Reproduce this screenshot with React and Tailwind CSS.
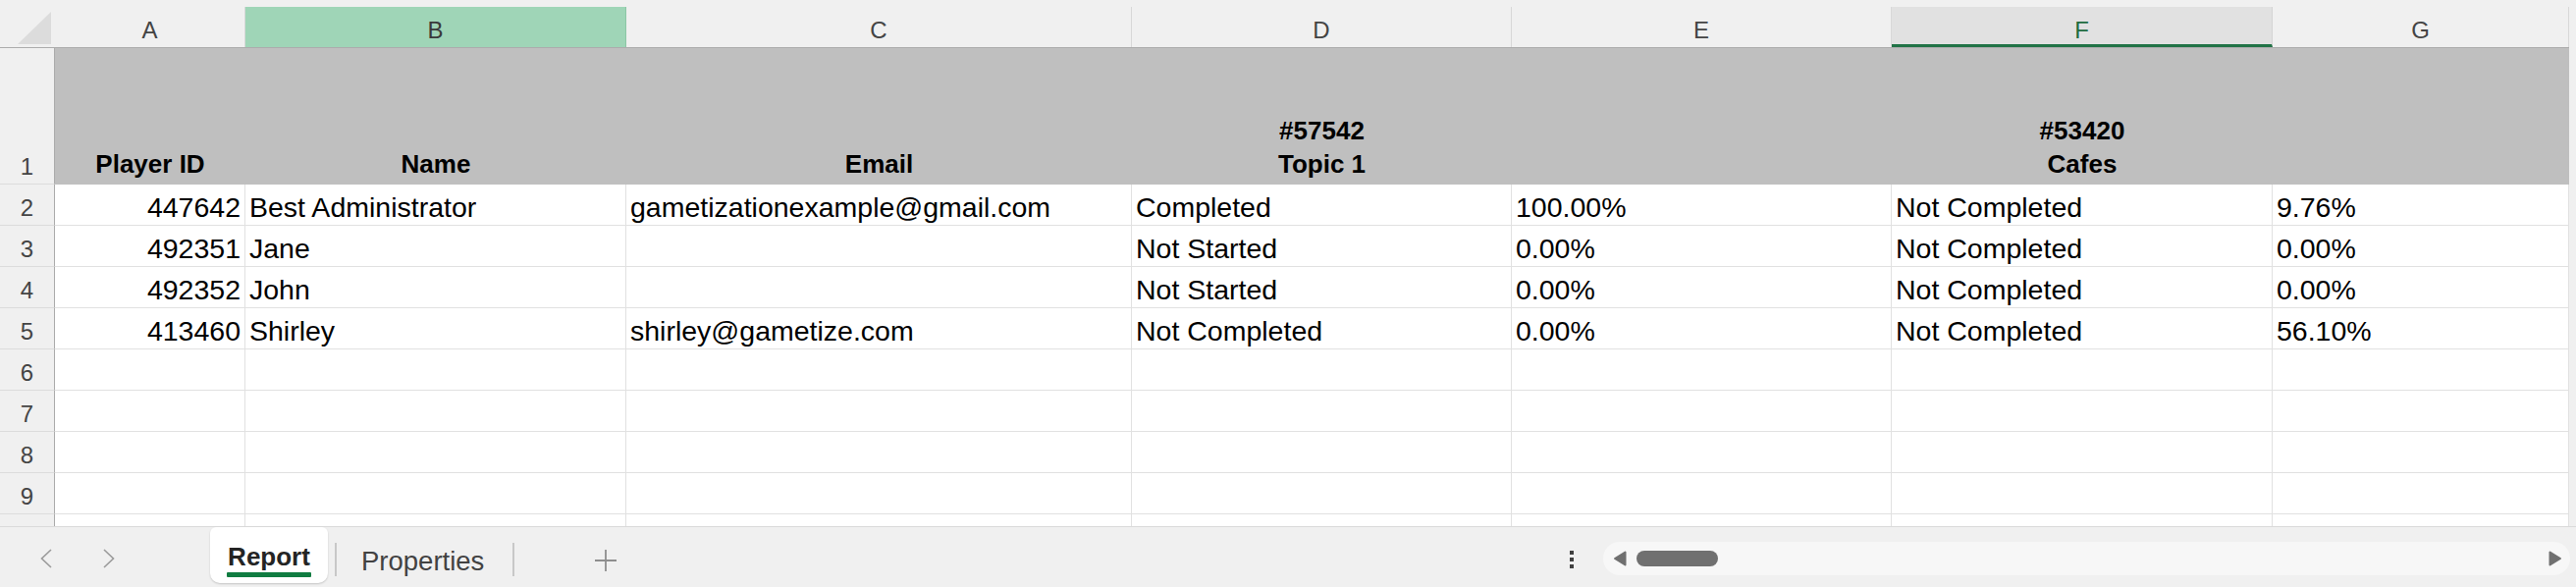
import React from "react";

// column widths (A..G), each cell carries its own right grid line
const columns = [
  { key: "A", w: "w-[194px]" },
  { key: "B", w: "w-[388px]" },
  { key: "C", w: "w-[515px]" },
  { key: "D", w: "w-[387px]" },
  { key: "E", w: "w-[387px]" },
  { key: "F", w: "w-[388px]" },
  { key: "G", w: "w-[302px]" },
];

const headings = [
  ["Player ID"],
  ["Name"],
  ["Email"],
  ["#57542", "Topic 1"],
  [],
  ["#53420", "Cafes"],
  [],
];

// first column holds the ids, right aligned
const rows = [
  ["447642", "Best Administrator", "gametizationexample@gmail.com", "Completed", "100.00%", "Not Completed", "9.76%"],
  ["492351", "Jane", "", "Not Started", "0.00%", "Not Completed", "0.00%"],
  ["492352", "John", "", "Not Started", "0.00%", "Not Completed", "0.00%"],
  ["413460", "Shirley", "shirley@gametize.com", "Not Completed", "0.00%", "Not Completed", "56.10%"],
  ["", "", "", "", "", "", ""],
  ["", "", "", "", "", "", ""],
  ["", "", "", "", "", "", ""],
  ["", "", "", "", "", "", ""],
  ["", "", "", "", "", "", ""],
];

const ColumnHeader = ({ col }) => {
  if (col.key === "B") {
    return (
      <div className={`${col.w} shrink-0 self-end h-[41px] bg-[#9fd5b7] border-r border-[#8cc7a5] flex items-end justify-center pb-[3px] text-[24px] leading-[28px] text-[#3a3a3a]`}>
        {col.key}
      </div>
    );
  }
  if (col.key === "F") {
    return (
      <div className={`${col.w} shrink-0 self-end h-[41px] bg-[#e1e1e1] border-r border-r-[#d4d4d4] border-b-[3px] border-b-[#217346] flex items-end justify-center pb-0 text-[24px] leading-[28px] text-[#1d6b3f]`}>
        {col.key}
      </div>
    );
  }
  return (
    <div className={`${col.w} shrink-0 self-end h-[41px] border-r border-[#d8d8d8] flex items-end justify-center pb-[3px] text-[24px] leading-[28px] text-[#444444]`}>
      {col.key}
    </div>
  );
};

const RowHeader = ({ children, tall }) => (
  <div
    className={`w-[56px] shrink-0 ${tall ? "h-[139px]" : "h-[42px]"} bg-[#f0f0f0] border-r border-r-[#ababab] border-b border-b-[#dcdcdc] flex items-end justify-center pb-[3px] text-[24px] leading-[28px] text-[#444444]`}
  >
    {children}
  </div>
);

const App = () => {
  return (
    <div className="w-[2624px] h-[598px] overflow-hidden bg-[#f0f0f0] flex flex-col font-['Liberation_Sans',Arial,sans-serif]">
      {/* Sheet area */}
      <div className="h-[536px] overflow-hidden flex">
        <div className="w-[2617px] shrink-0 flex flex-col">
          {/* Column letters */}
          <div className="h-[49px] shrink-0 flex border-b border-[#acacac]">
            <div className="w-[56px] shrink-0 flex items-end justify-end pr-[4px] pb-[3px]">
              <svg width="34" height="33" viewBox="0 0 34 33">
                <path d="M34 0 L34 33 L0 33 Z" fill="#dcdcdc" />
              </svg>
            </div>
            {columns.map((col) => (
              <ColumnHeader key={col.key} col={col} />
            ))}
          </div>

          {/* Row 1: report headings */}
          <div className="flex shrink-0">
            <RowHeader tall>1</RowHeader>
            {columns.map((col, i) => (
              <div
                key={col.key}
                className={`${col.w} shrink-0 h-[139px] bg-[#bfbfbf] flex flex-col items-center justify-end pb-[4px] text-[26px] leading-[34px] font-bold text-black whitespace-nowrap`}
              >
                {headings[i].map((line) => (
                  <span key={line}>{line}</span>
                ))}
              </div>
            ))}
          </div>

          {/* Data rows */}
          {rows.map((row, r) => (
            <div key={r} className="flex shrink-0">
              <RowHeader>{r + 2}</RowHeader>
              {columns.map((col, i) => (
                <div
                  key={col.key}
                  className={`${col.w} shrink-0 h-[42px] bg-white border-r border-b border-[#e1e1e1] flex items-end px-[4px] pb-[2px] text-[28.5px] leading-[32px] text-black whitespace-nowrap overflow-hidden ${i === 0 ? "justify-end" : "justify-start"}`}
                >
                  {row[i]}
                </div>
              ))}
            </div>
          ))}
          <div className="flex shrink-0">
            <RowHeader>10</RowHeader>
            {columns.map((col) => (
              <div key={col.key} className={`${col.w} shrink-0 h-[42px] bg-white border-r border-b border-[#e1e1e1]`} />
            ))}
          </div>
        </div>
        <div className="flex-1 bg-[#f0f0f0]" />
      </div>

      {/* Sheet tabs + horizontal scrollbar */}
      <div className="h-[62px] shrink-0 flex items-start border-t border-[#dadada] bg-[#f0f0f0]">
        <svg className="ml-[41px] mt-[22px]" width="12" height="20" viewBox="0 0 12 20">
          <path d="M11 1 L1.5 10 L11 19" fill="none" stroke="#9a9a9a" strokeWidth="1.6" />
        </svg>
        <svg className="ml-[52px] mt-[22px]" width="12" height="20" viewBox="0 0 12 20">
          <path d="M1 1 L10.5 10 L1 19" fill="none" stroke="#9a9a9a" strokeWidth="1.6" />
        </svg>

        <div className="ml-[97px] w-[120px] h-[57px] bg-white rounded-b-[10px] rounded-t-[6px] shadow-[0_1px_2px_rgba(0,0,0,0.18)] flex flex-col items-center pt-[15px]">
          <span className="text-[26px] leading-[30px] font-bold text-[#242424]">Report</span>
          <div className="mt-[1px] w-[86px] h-[5px] bg-[#107c41] rounded-[1px]" />
        </div>

        <div className="ml-[7px] mt-[16px] w-[2px] h-[34px] bg-[#c8c8c8]" />
        <div className="w-[179px] pl-[25px] mt-[19px] text-[27.5px] leading-[32px] text-[#424242] whitespace-nowrap">
          Properties
        </div>
        <div className="mt-[16px] w-[2px] h-[34px] bg-[#c8c8c8]" />

        <svg className="ml-[82px] mt-[23px]" width="22" height="22" viewBox="0 0 22 22">
          <path d="M11 0 V22 M0 11 H22" stroke="#8e8e8e" strokeWidth="1.8" />
        </svg>

        {/* more menu dots */}
        <div className="ml-[971px] mt-[24px] flex flex-col gap-[3px]">
          <div className="w-[4px] h-[4px] bg-[#404040]" />
          <div className="w-[4px] h-[4px] bg-[#404040]" />
          <div className="w-[4px] h-[4px] bg-[#404040]" />
        </div>

        {/* scroll track */}
        <div className="ml-[30px] mt-[15px] w-[985px] h-[34px] rounded-full bg-[#f7f7f7] flex items-center px-[8px]">
          <svg className="ml-[2px]" width="14" height="16" viewBox="0 0 14 16">
            <path d="M12.5 1.5 L12.5 14.5 L2 8 Z" fill="#707070" stroke="#707070" strokeWidth="2" strokeLinejoin="round" />
          </svg>
          <div className="ml-[10px] w-[83px] h-[16px] rounded-full bg-[#707070]" />
          <div className="flex-1" />
          <svg width="14" height="16" viewBox="0 0 14 16">
            <path d="M1.5 1.5 L1.5 14.5 L12 8 Z" fill="#707070" stroke="#707070" strokeWidth="2" strokeLinejoin="round" />
          </svg>
        </div>
      </div>
    </div>
  );
};

export default App;
